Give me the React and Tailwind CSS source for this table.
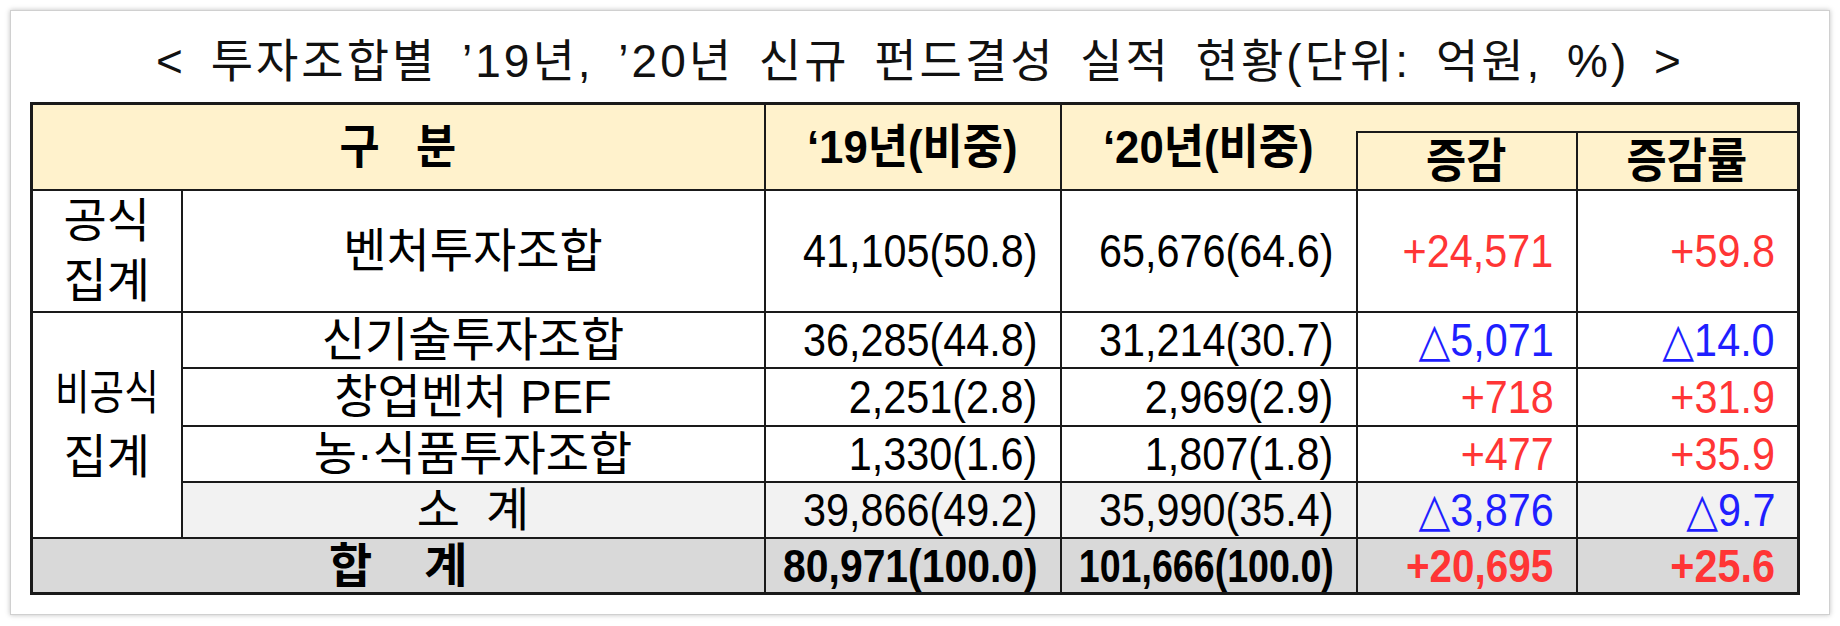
import React from "react";

// 투자조합별 신규 펀드결성 실적 표
const LINE = "border-2 border-[#1a1a1a]";
const RED = "text-[#ff3535]";
const BLUE = "text-[#1f1fff]";

const subRows = [
  { name: "신기술투자조합", y19: "36,285(44.8)", y20: "31,214(30.7)", diff: "△5,071", rate: "△14.0", down: true, h: "h-[56px]" },
  { name: "창업벤처 PEF", y19: "2,251(2.8)", y20: "2,969(2.9)", diff: "+718", rate: "+31.9", down: false, h: "h-[58px]" },
  { name: "농·식품투자조합", y19: "1,330(1.6)", y20: "1,807(1.8)", diff: "+477", rate: "+35.9", down: false, h: "h-[56px]" },
];

// header text is a bit narrower than normal
function H({ children }) {
  return (
    <div className="flex justify-center">
      <span className="inline-block whitespace-nowrap origin-center scale-x-[0.93]">{children}</span>
    </div>
  );
}

function Num({ value, className = "", scale = "scale-x-[0.88]" }) {
  return (
    <td className={`${LINE} px-[22px] align-middle ${className}`}>
      <div className="flex justify-end">
        <span className={`inline-block whitespace-nowrap origin-right ${scale}`}>{value}</span>
      </div>
    </td>
  );
}

export default function App() {
  return (
    <div className="min-h-screen bg-white pt-[10px] pl-[10px] text-black [font-family:'Liberation_Sans','DejaVu_Sans','Noto_Sans_CJK_KR',sans-serif]">
      <div className="w-[1820px] h-[605px] border border-[#d0d0d0] bg-white shadow-[0_0_5px_rgba(0,0,0,0.25)]">
        <div className="h-[91px] flex items-center justify-center pt-[8px] text-[46px] leading-none tracking-[3px] [word-spacing:9px] text-[#111] whitespace-nowrap">
          &lt; 투자조합별 ’19년, ’20년 신규 펀드결성 실적 현황(단위: 억원, %) &gt;
        </div>

        <table className="ml-[19px] w-[1767px] table-fixed border-collapse border-[3px] border-[#1a1a1a] text-[47px] leading-none">
          <colgroup>
            <col className="w-[150px]" />
            <col className="w-[583px]" />
            <col className="w-[296px]" />
            <col className="w-[296px]" />
            <col className="w-[220px]" />
            <col className="w-[222px]" />
          </colgroup>
          <thead className="bg-[#fff2cc] font-bold">
            <tr className="h-[28px]">
              <th colSpan={2} rowSpan={2} className={`${LINE} align-middle`}>
                <H>구&nbsp;&nbsp;&nbsp;분</H>
              </th>
              <th rowSpan={2} className={`${LINE} align-middle`}>
                <H>‘19년(비중)</H>
              </th>
              <th rowSpan={2} className={`${LINE} border-r-0 align-middle`}>
                <H>‘20년(비중)</H>
              </th>
              <th colSpan={2} className={`${LINE} border-l-0`}></th>
            </tr>
            <tr className="h-[58px]">
              <th className={`${LINE} align-middle`}>
                <H>증감</H>
              </th>
              <th className={`${LINE} align-middle`}>
                <H>증감률</H>
              </th>
            </tr>
          </thead>
          <tbody>
            <tr className="h-[119px]">
              <td className={`${LINE} text-center align-middle leading-[60px]`}>
                공식
                <br />
                집계
              </td>
              <td className={`${LINE} text-center align-middle`}>벤처투자조합</td>
              <Num value="41,105(50.8)" />
              <Num value="65,676(64.6)" />
              <Num value="+24,571" className={RED} />
              <Num value="+59.8" className={RED} />
            </tr>

            {subRows.map((row, i) => (
              <tr key={row.name} className={row.h}>
                {i === 0 && (
                  <td rowSpan={4} className={`${LINE} text-center align-middle leading-[64px] whitespace-nowrap`}>
                    <span className="inline-block origin-center scale-x-[0.8]">비공식</span>
                    <br />
                    집계
                  </td>
                )}
                <td className={`${LINE} text-center align-middle`}>{row.name}</td>
                <Num value={row.y19} />
                <Num value={row.y20} />
                <Num value={row.diff} className={row.down ? BLUE : RED} />
                <Num value={row.rate} className={row.down ? BLUE : RED} />
              </tr>
            ))}

            <tr className="h-[56px] bg-[#f2f2f2]">
              <td className={`${LINE} text-center align-middle`}>소&nbsp;&nbsp;계</td>
              <Num value="39,866(49.2)" />
              <Num value="35,990(35.4)" />
              <Num value="△3,876" className={BLUE} />
              <Num value="△9.7" className={BLUE} />
            </tr>

            <tr className="h-[56px] bg-[#d9d9d9] font-bold">
              <td colSpan={2} className={`${LINE} text-center align-middle`}>
                합&nbsp;&nbsp;&nbsp;&nbsp;계
              </td>
              <Num value="80,971(100.0)" scale="scale-x-[0.87]" />
              <Num value="101,666(100.0)" scale="scale-x-[0.8]" />
              <Num value="+20,695" className={RED} scale="scale-x-[0.86]" />
              <Num value="+25.6" className={RED} scale="scale-x-[0.88]" />
            </tr>
          </tbody>
        </table>
      </div>
    </div>
  );
}
